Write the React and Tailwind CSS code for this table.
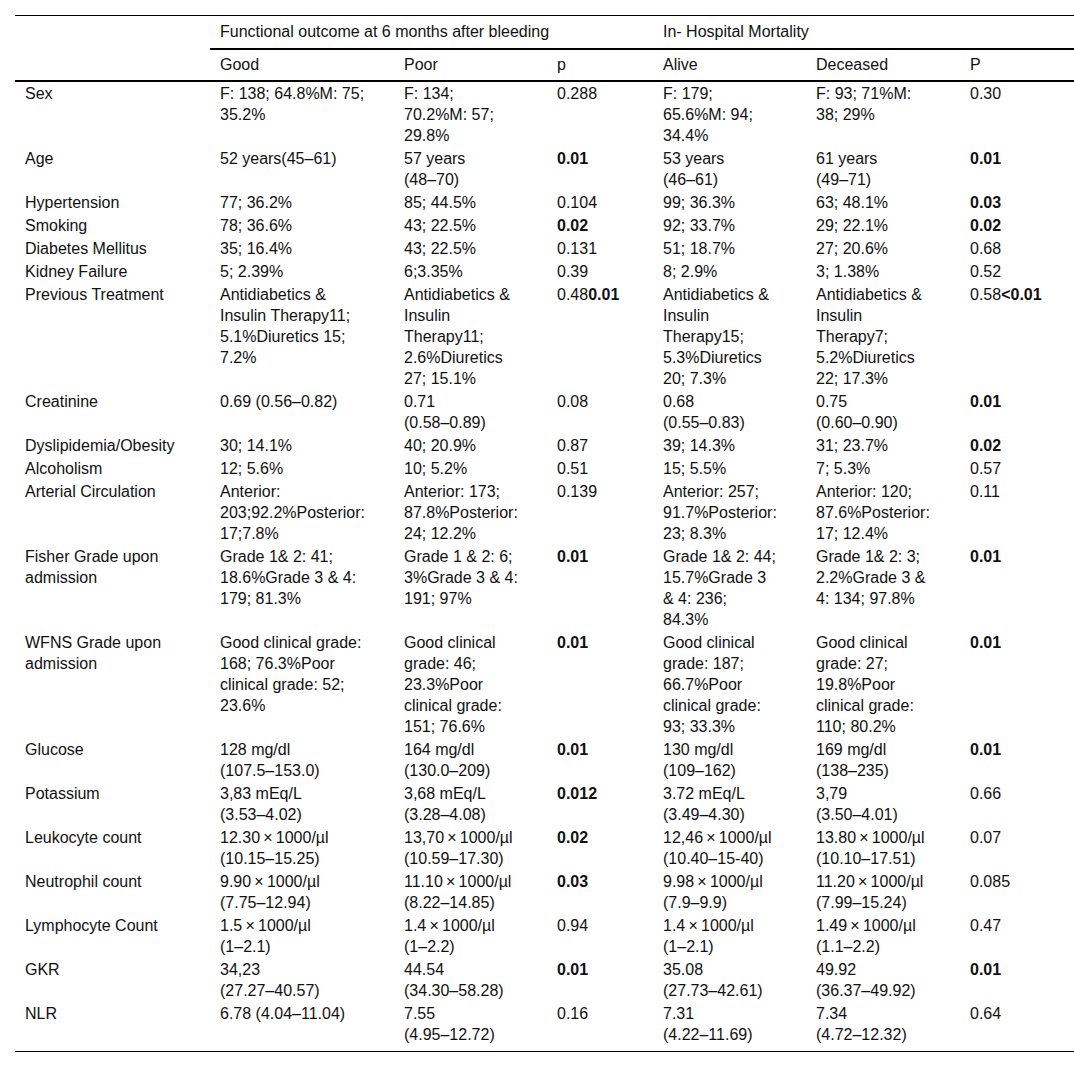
import React from "react";

const x = "\u2009×\u2009";

const B = ({ children }) => <span className="font-bold">{children}</span>;

const widths = [195, 184, 153, 106, 153, 154, 114];

const rows = [
  ["Sex", "F: 138; 64.8%M: 75;\n35.2%", "F: 134;\n70.2%M: 57;\n29.8%", "0.288", "F: 179;\n65.6%M: 94;\n34.4%", "F: 93; 71%M:\n38; 29%", "0.30"],
  ["Age", "52 years(45–61)", "57 years\n(48–70)", <B>0.01</B>, "53 years\n(46–61)", "61 years\n(49–71)", <B>0.01</B>],
  ["Hypertension", "77; 36.2%", "85; 44.5%", "0.104", "99; 36.3%", "63; 48.1%", <B>0.03</B>],
  ["Smoking", "78; 36.6%", "43; 22.5%", <B>0.02</B>, "92; 33.7%", "29; 22.1%", <B>0.02</B>],
  ["Diabetes Mellitus", "35; 16.4%", "43; 22.5%", "0.131", "51; 18.7%", "27; 20.6%", "0.68"],
  ["Kidney Failure", "5; 2.39%", "6;3.35%", "0.39", "8; 2.9%", "3; 1.38%", "0.52"],
  [
    "Previous Treatment",
    "Antidiabetics &\nInsulin Therapy11;\n5.1%Diuretics 15;\n7.2%",
    "Antidiabetics &\nInsulin\nTherapy11;\n2.6%Diuretics\n27; 15.1%",
    <>0.48<B>0.01</B></>,
    "Antidiabetics &\nInsulin\nTherapy15;\n5.3%Diuretics\n20; 7.3%",
    "Antidiabetics &\nInsulin\nTherapy7;\n5.2%Diuretics\n22; 17.3%",
    <>0.58<B>&lt;0.01</B></>,
  ],
  ["Creatinine", "0.69 (0.56–0.82)", "0.71\n(0.58–0.89)", "0.08", "0.68\n(0.55–0.83)", "0.75\n(0.60–0.90)", <B>0.01</B>],
  ["Dyslipidemia/Obesity", "30; 14.1%", "40; 20.9%", "0.87", "39; 14.3%", "31; 23.7%", <B>0.02</B>],
  ["Alcoholism", "12; 5.6%", "10; 5.2%", "0.51", "15; 5.5%", "7; 5.3%", "0.57"],
  [
    "Arterial Circulation",
    "Anterior:\n203;92.2%Posterior:\n17;7.8%",
    "Anterior: 173;\n87.8%Posterior:\n24; 12.2%",
    "0.139",
    "Anterior: 257;\n91.7%Posterior:\n23; 8.3%",
    "Anterior: 120;\n87.6%Posterior:\n17; 12.4%",
    "0.11",
  ],
  [
    "Fisher Grade upon\nadmission",
    "Grade 1& 2: 41;\n18.6%Grade 3 & 4:\n179; 81.3%",
    "Grade 1 & 2: 6;\n3%Grade 3 & 4:\n191; 97%",
    <B>0.01</B>,
    "Grade 1& 2: 44;\n15.7%Grade 3\n& 4: 236;\n84.3%",
    "Grade 1& 2: 3;\n2.2%Grade 3 &\n4: 134; 97.8%",
    <B>0.01</B>,
  ],
  [
    "WFNS Grade upon\nadmission",
    "Good clinical grade:\n168; 76.3%Poor\nclinical grade: 52;\n23.6%",
    "Good clinical\ngrade: 46;\n23.3%Poor\nclinical grade:\n151; 76.6%",
    <B>0.01</B>,
    "Good clinical\ngrade: 187;\n66.7%Poor\nclinical grade:\n93; 33.3%",
    "Good clinical\ngrade: 27;\n19.8%Poor\nclinical grade:\n110; 80.2%",
    <B>0.01</B>,
  ],
  ["Glucose", "128 mg/dl\n(107.5–153.0)", "164 mg/dl\n(130.0–209)", <B>0.01</B>, "130 mg/dl\n(109–162)", "169 mg/dl\n(138–235)", <B>0.01</B>],
  ["Potassium", "3,83 mEq/L\n(3.53–4.02)", "3,68 mEq/L\n(3.28–4.08)", <B>0.012</B>, "3.72 mEq/L\n(3.49–4.30)", "3,79\n(3.50–4.01)", "0.66"],
  ["Leukocyte count", `12.30${x}1000/µl\n(10.15–15.25)`, `13,70${x}1000/µl\n(10.59–17.30)`, <B>0.02</B>, `12,46${x}1000/µl\n(10.40–15-40)`, `13.80${x}1000/µl\n(10.10–17.51)`, "0.07"],
  ["Neutrophil count", `9.90${x}1000/µl\n(7.75–12.94)`, `11.10${x}1000/µl\n(8.22–14.85)`, <B>0.03</B>, `9.98${x}1000/µl\n(7.9–9.9)`, `11.20${x}1000/µl\n(7.99–15.24)`, "0.085"],
  ["Lymphocyte Count", `1.5${x}1000/µl\n(1–2.1)`, `1.4${x}1000/µl\n(1–2.2)`, "0.94", `1.4${x}1000/µl\n(1–2.1)`, `1.49${x}1000/µl\n(1.1–2.2)`, "0.47"],
  ["GKR", "34,23\n(27.27–40.57)", "44.54\n(34.30–58.28)", <B>0.01</B>, "35.08\n(27.73–42.61)", "49.92\n(36.37–49.92)", <B>0.01</B>],
  ["NLR", "6.78 (4.04–11.04)", "7.55\n(4.95–12.72)", "0.16", "7.31\n(4.22–11.69)", "7.34\n(4.72–12.32)", "0.64"],
];

export default function App() {
  return (
    <div className="min-h-screen bg-white pt-[15px] pl-[15px] font-['Liberation_Sans',Arial,sans-serif] text-[16px] leading-[21px] text-[#111]">
      <table className="w-[1059px] table-fixed border-separate border-spacing-0 text-left">
        <colgroup>
          {widths.map((w, i) => (
            <col key={i} style={{ width: w }} />
          ))}
        </colgroup>
        <thead>
          <tr>
            <th className="border-t border-black pl-[10px] pt-[5px] pb-[6px] font-normal" />
            <th colSpan={3} className="border-t border-b-2 border-black pl-[10px] pt-[5px] pb-[6px] font-normal whitespace-pre">
              Functional outcome at 6 months after bleeding
            </th>
            <th colSpan={3} className="border-t border-b-2 border-black pl-[10px] pt-[5px] pb-[6px] font-normal whitespace-pre">
              In- Hospital Mortality
            </th>
          </tr>
          <tr>
            {["", "Good", "Poor", "p", "Alive", "Deceased", "P"].map((h, i) => (
              <th key={i} className="border-b-2 border-black pl-[10px] pt-[4px] pb-[5px] font-normal whitespace-pre">
                {h}
              </th>
            ))}
          </tr>
        </thead>
        <tbody>
          {rows.map((r, ri) => {
            const last = ri === rows.length - 1;
            return (
              <tr key={ri}>
                {r.map((c, ci) => (
                  <td
                    key={ci}
                    className={`pl-[10px] pt-[1px] align-top whitespace-pre ${
                      last ? "pb-[6px] border-b border-black" : "pb-[1px]"
                    }`}
                  >
                    {c}
                  </td>
                ))}
              </tr>
            );
          })}
        </tbody>
      </table>
    </div>
  );
}
